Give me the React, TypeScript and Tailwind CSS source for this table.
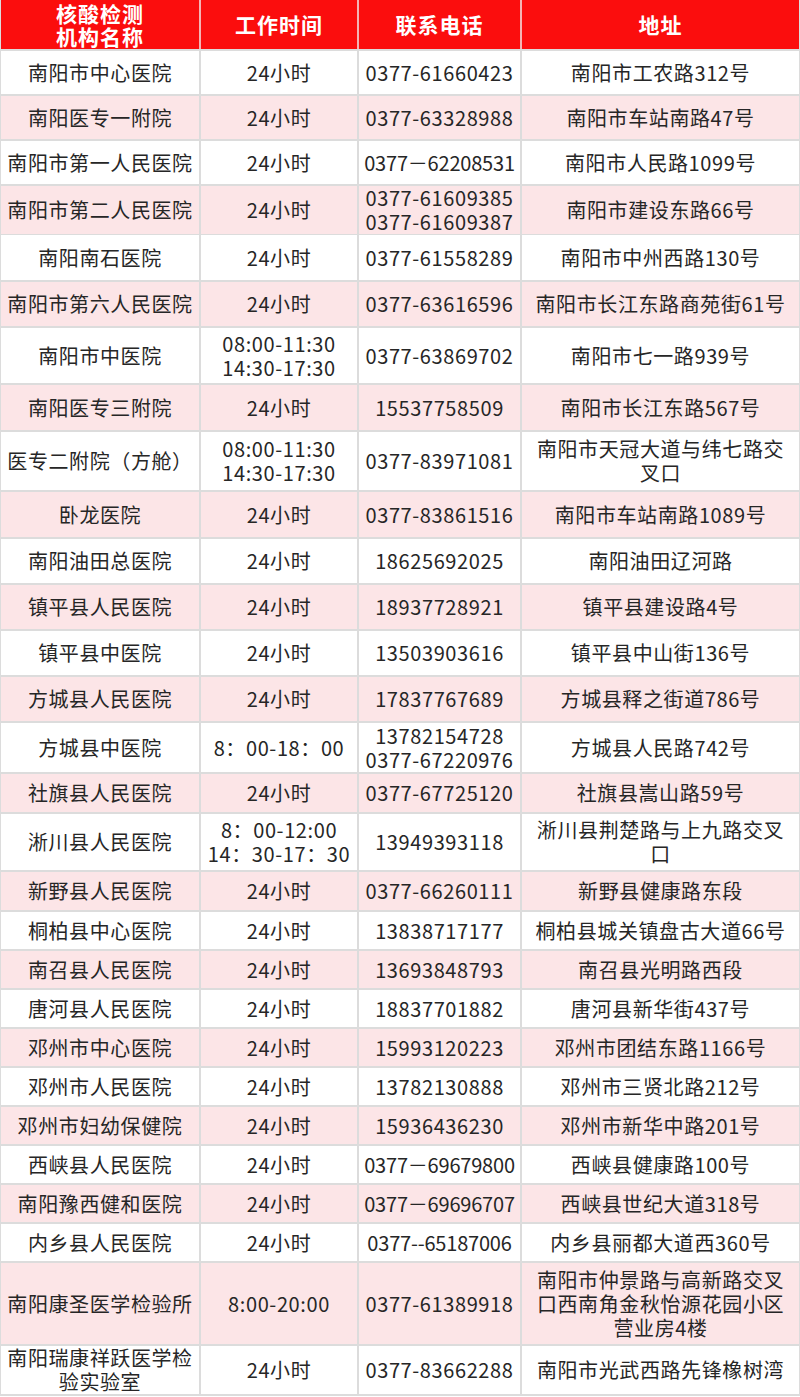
const rows = [
  { name: '南阳市中心医院', time: '24小时', phone: '0377-61660423', addr: '南阳市工农路312号', h: 'h-[43px]' },
  { name: '南阳医专一附院', time: '24小时', phone: '0377-63328988', addr: '南阳市车站南路47号', h: 'h-[43px]' },
  { name: '南阳市第一人民医院', time: '24小时', phone: '0377－62208531', addr: '南阳市人民路1099号', h: 'h-[43px]' },
  { name: '南阳市第二人民医院', time: '24小时', phone: '0377-61609385\n0377-61609387', addr: '南阳市建设东路66号', h: 'h-[47px]' },
  { name: '南阳南石医院', time: '24小时', phone: '0377-61558289', addr: '南阳市中州西路130号', h: 'h-[45px]' },
  { name: '南阳市第六人民医院', time: '24小时', phone: '0377-63616596', addr: '南阳市长江东路商苑街61号', h: 'h-[44px]' },
  { name: '南阳市中医院', time: '08:00-11:30\n14:30-17:30', phone: '0377-63869702', addr: '南阳市七一路939号', h: 'h-[55px]' },
  { name: '南阳医专三附院', time: '24小时', phone: '15537758509', addr: '南阳市长江东路567号', h: 'h-[45px]' },
  { name: '医专二附院（方舱）', time: '08:00-11:30\n14:30-17:30', phone: '0377-83971081', addr: '南阳市天冠大道与纬七路交\n叉口', h: 'h-[58px]' },
  { name: '卧龙医院', time: '24小时', phone: '0377-83861516', addr: '南阳市车站南路1089号', h: 'h-[45px]' },
  { name: '南阳油田总医院', time: '24小时', phone: '18625692025', addr: '南阳油田辽河路', h: 'h-[44px]' },
  { name: '镇平县人民医院', time: '24小时', phone: '18937728921', addr: '镇平县建设路4号', h: 'h-[44px]' },
  { name: '镇平县中医院', time: '24小时', phone: '13503903616', addr: '镇平县中山街136号', h: 'h-[44px]' },
  { name: '方城县人民医院', time: '24小时', phone: '17837767689', addr: '方城县释之街道786号', h: 'h-[44px]' },
  { name: '方城县中医院', time: '8：00-18：00', phone: '13782154728\n0377-67220976', addr: '方城县人民路742号', h: 'h-[49px]' },
  { name: '社旗县人民医院', time: '24小时', phone: '0377-67725120', addr: '社旗县嵩山路59号', h: 'h-[38px]' },
  { name: '淅川县人民医院', time: '8：00-12:00\n14：30-17：30', phone: '13949393118', addr: '淅川县荆楚路与上九路交叉\n口', h: 'h-[56px]' },
  { name: '新野县人民医院', time: '24小时', phone: '0377-66260111', addr: '新野县健康路东段', h: 'h-[38px]' },
  { name: '桐柏县中心医院', time: '24小时', phone: '13838717177', addr: '桐柏县城关镇盘古大道66号', h: 'h-[37px]' },
  { name: '南召县人民医院', time: '24小时', phone: '13693848793', addr: '南召县光明路西段', h: 'h-[37px]' },
  { name: '唐河县人民医院', time: '24小时', phone: '18837701882', addr: '唐河县新华街437号', h: 'h-[37px]' },
  { name: '邓州市中心医院', time: '24小时', phone: '15993120223', addr: '邓州市团结东路1166号', h: 'h-[37px]' },
  { name: '邓州市人民医院', time: '24小时', phone: '13782130888', addr: '邓州市三贤北路212号', h: 'h-[37px]' },
  { name: '邓州市妇幼保健院', time: '24小时', phone: '15936436230', addr: '邓州市新华中路201号', h: 'h-[37px]' },
  { name: '西峡县人民医院', time: '24小时', phone: '0377－69679800', addr: '西峡县健康路100号', h: 'h-[37px]' },
  { name: '南阳豫西健和医院', time: '24小时', phone: '0377－69696707', addr: '西峡县世纪大道318号', h: 'h-[37px]' },
  { name: '内乡县人民医院', time: '24小时', phone: '0377--65187006', addr: '内乡县丽都大道西360号', h: 'h-[37px]' },
  { name: '南阳康圣医学检验所', time: '8:00-20:00', phone: '0377-61389918', addr: '南阳市仲景路与高新路交叉\n口西南角金秋怡源花园小区\n营业房4楼', h: 'h-[81px]' },
  { name: '南阳瑞康祥跃医学检\n验实验室', time: '24小时', phone: '0377-83662288', addr: '南阳市光武西路先锋橡树湾', h: 'h-[48px]' },
];

const cols = 'grid grid-cols-[198px_156px_161px_1fr] gap-x-[2px]';

function Cell({ text, bg, tight }: { text: string; bg: string; tight?: boolean }) {
  return (
    <div
      className={`flex items-center justify-center whitespace-pre text-center leading-[24px] ${bg} ${
        tight ? 'tracking-[-0.2px]' : ''
      }`}
    >
      {text}
    </div>
  );
}

export default function App() {
  return (
    <div
      className="w-[800px] bg-[#dcdcdc] px-px pb-[2px] text-[20px] tracking-[0.6px] text-[#262626]"
      style={{ fontFamily: '"Noto Sans CJK SC", "Noto Sans", sans-serif' }}
    >
      <div className={`${cols} h-[49px] bg-[#f4b4b4] text-[21px] font-bold tracking-[1px] text-white`}>
        <div className="flex items-center justify-center bg-[#fb0d0d] text-center leading-[23px]">
          核酸检测
          <br />
          机构名称
        </div>
        <div className="flex items-center justify-center bg-[#fb0d0d]">工作时间</div>
        <div className="flex items-center justify-center bg-[#fb0d0d]">联系电话</div>
        <div className="flex items-center justify-center bg-[#fb0d0d]">地址</div>
      </div>
      <div className="mt-[2px] flex flex-col gap-y-[2px]">
        {rows.map((r, i) => {
          const bg = i % 2 === 1 ? 'bg-[#fce5e7]' : 'bg-white';
          return (
            <div key={i} className={`${cols} ${r.h}`}>
              <Cell text={r.name} bg={bg} />
              <Cell text={r.time} bg={bg} />
              <Cell text={r.phone} bg={bg} tight={r.phone.includes('－') || r.phone.includes('--')} />
              <Cell text={r.addr} bg={bg} />
            </div>
          );
        })}
      </div>
    </div>
  );
}
